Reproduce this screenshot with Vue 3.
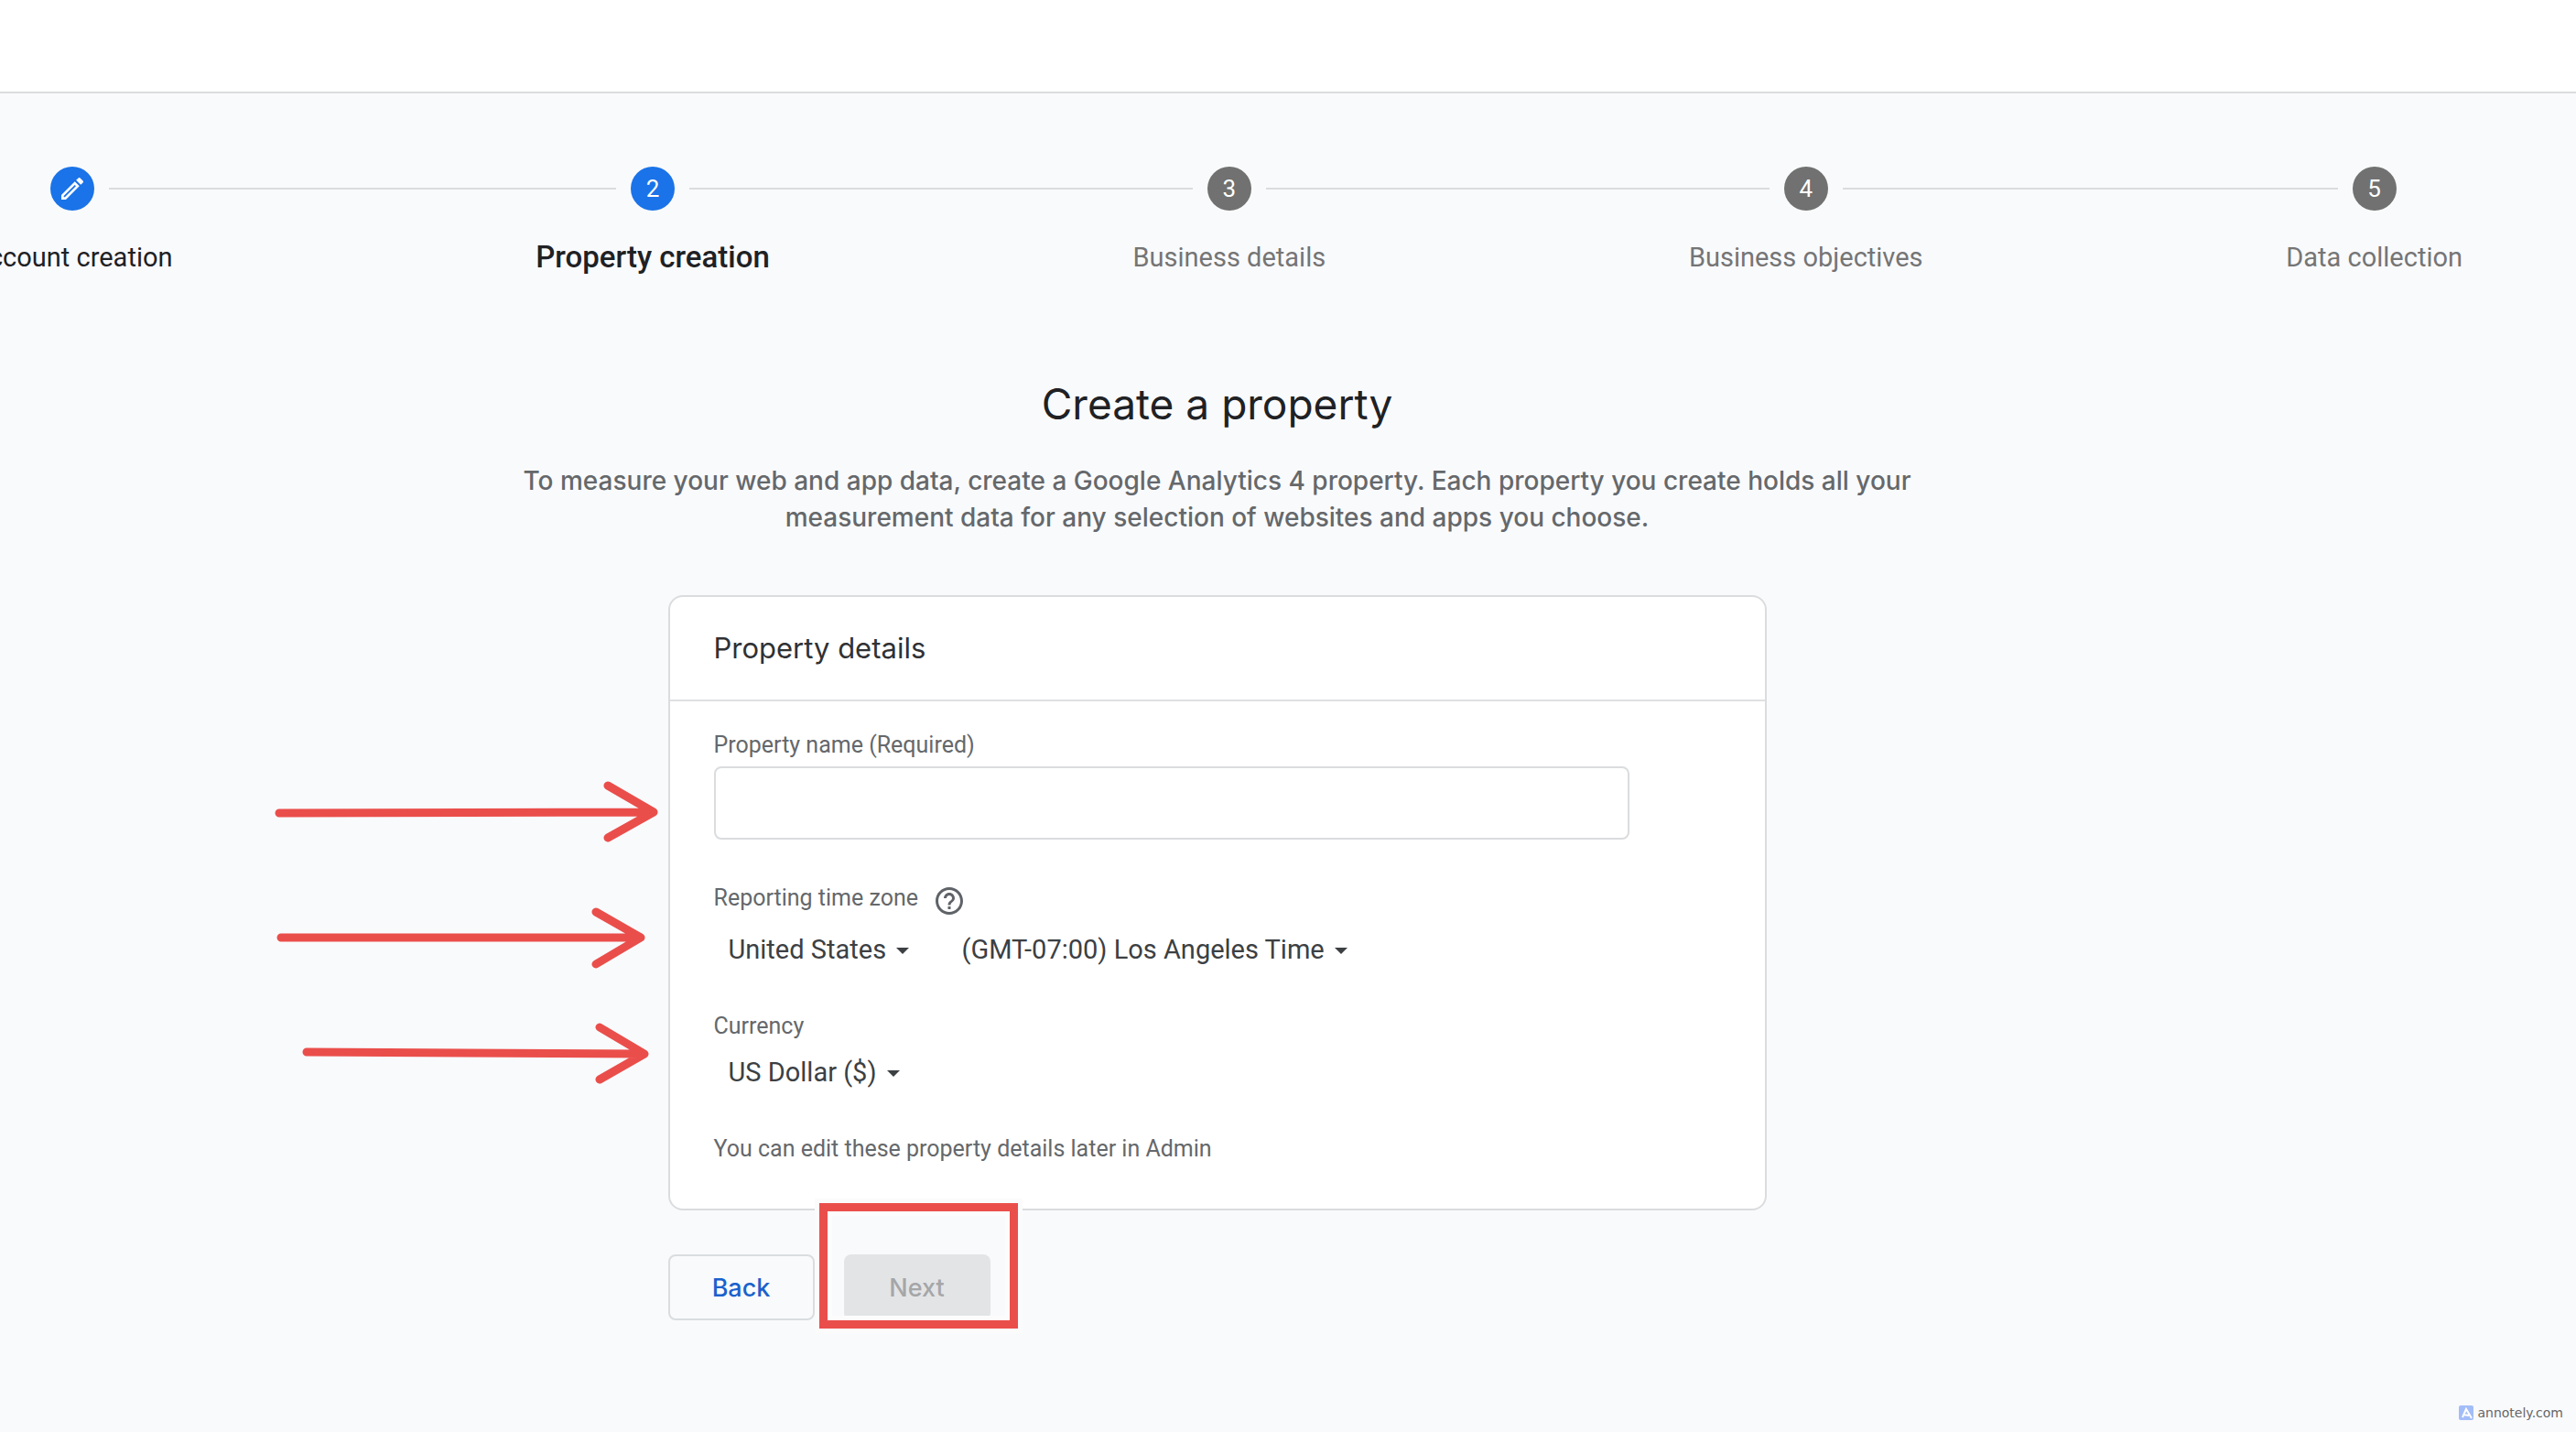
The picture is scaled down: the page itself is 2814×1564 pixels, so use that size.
<template>
  <div class="page">
    <header class="topbar"></header>

    <main class="content">
      <ol class="stepper">
        <template v-for="(s, i) in steps" :key="s.label">
          <li v-if="i > 0" class="connector" aria-hidden="true"></li>
          <li class="step" :class="s.state">
            <div class="marker">
              <span class="dot">
                <svg v-if="s.state === 'done'" class="pencil" viewBox="0 0 24 24">
                  <path d="M14.06 9.02l.92.92L5.92 19H5v-.92l9.06-9.06M17.66 3c-.25 0-.51.1-.7.29l-1.83 1.83 3.75 3.75 1.83-1.83c.39-.39.39-1.02 0-1.41l-2.34-2.34c-.2-.2-.45-.29-.71-.29zm-3.6 3.19L3 17.25V21h3.75L17.81 9.94l-3.75-3.75z" />
                </svg>
                <template v-else>{{ i + 1 }}</template>
              </span>
            </div>
            <span class="step-label">{{ s.label }}</span>
          </li>
        </template>
      </ol>

      <h1>Create a property</h1>
      <p class="intro">
        To measure your web and app data, create a Google Analytics 4 property. Each property you create holds all your
        measurement data for any selection of websites and apps you choose.
      </p>

      <form class="form" @submit.prevent>
        <section class="card">
          <h2>Property details</h2>
          <div class="card-body">
            <div class="field">
              <label class="small name-label" for="name">Property name (Required)</label>
              <input id="name" v-model="name" type="text" />
            </div>

            <div class="field">
              <div class="field-head">
                <label class="small" for="country">Reporting time zone</label>
                <button type="button" class="help" aria-label="Help">
                  <svg viewBox="0 0 24 24">
                    <path d="M11 18h2v-2h-2v2zm1-16C6.48 2 2 6.48 2 12s4.48 10 10 10 10-4.48 10-10S17.52 2 12 2zm0 18c-4.41 0-8-3.59-8-8s3.59-8 8-8 8 3.59 8 8-3.59 8-8 8zm0-14c-2.21 0-4 1.79-4 4h2c0-1.1.9-2 2-2s2 .9 2 2c0 2-3 1.75-3 5h2c0-2.25 3-2.5 3-5 0-2.21-1.79-4-4-4z" />
                  </svg>
                </button>
              </div>
              <div class="selects">
                <div class="select">
                  <select id="country" v-model="country">
                    <option>United States</option>
                  </select>
                  <svg viewBox="0 0 14 7"><path d="M0 0h14L7 7z" /></svg>
                </div>
                <div class="select">
                  <select v-model="zone" aria-label="Time zone">
                    <option>(GMT-07:00) Los Angeles Time</option>
                  </select>
                  <svg viewBox="0 0 14 7"><path d="M0 0h14L7 7z" /></svg>
                </div>
              </div>
            </div>

            <div class="field">
              <div class="field-head">
                <label class="small" for="currency">Currency</label>
              </div>
              <div class="selects">
                <div class="select">
                  <select id="currency" v-model="currency">
                    <option>US Dollar ($)</option>
                  </select>
                  <svg viewBox="0 0 14 7"><path d="M0 0h14L7 7z" /></svg>
                </div>
              </div>
            </div>

            <p class="small">You can edit these property details later in Admin</p>
          </div>
        </section>

        <div class="actions">
          <button type="button" class="btn back">Back</button>
          <div class="marked">
            <button type="submit" class="btn next" :disabled="!name">Next</button>
            <div class="frame"></div>
          </div>
        </div>

        <svg class="arrows" viewBox="0 0 440 360">
          <path d="M15 48L423 47M374 18L424 47L374 75" />
          <path d="M17 184H409M361 156L410 184L361 213" />
          <path d="M45 309L413 311M365 282L414 311L365 339" />
        </svg>
      </form>
    </main>

    <footer class="credit">
      <svg viewBox="0 0 16 16">
        <rect width="16" height="16" rx="2" fill="#a3bdf8" />
        <path d="M4 13L8 4L14 14M5 10L11 11" fill="none" stroke="#fff" stroke-width="2" />
      </svg>
      <span>annotely.com</span>
    </footer>
  </div>
</template>

<script setup>
import { ref } from 'vue'

const steps = [
  { label: 'Account creation', state: 'done' },
  { label: 'Property creation', state: 'current' },
  { label: 'Business details', state: 'todo' },
  { label: 'Business objectives', state: 'todo' },
  { label: 'Data collection', state: 'todo' }
]

const name = ref('')
const country = ref('United States')
const zone = ref('(GMT-07:00) Los Angeles Time')
const currency = ref('US Dollar ($)')
</script>

<style>
body { margin: 0; background: #f9fafc; }
</style>

<style scoped>
.page { display: flex; flex-direction: column; min-height: 100vh; overflow-x: hidden; background: #f9fafc; font-family: Roboto, sans-serif; color: #202124; }
.topbar { height: 100px; background: #fff; border-bottom: 2px solid #dadddd; }

/* the wizard is scrolled a little to the right, so the first step is cut off */
.content { margin: 80px 124px 0 -31px; }

.stepper { display: flex; margin: 0; padding: 0; list-style: none; }
.step { display: flex; flex-direction: column; gap: 32px; color: #757575; }
.marker { display: flex; align-items: center; gap: 16px; }
.marker::before, .marker::after { content: ''; flex: 1; height: 2px; background: #dadcde; }
.step:first-child .marker::before, .step:last-child .marker::after { background: none; }
.connector { flex: 1; height: 2px; margin-top: 23px; background: #dadcde; }
.dot { display: flex; align-items: center; justify-content: center; width: 48px; height: 48px; border-radius: 50%; background: #707170; color: #fff; font-size: 26px; }
.done .dot, .current .dot { background: #1a73e8; }
.pencil { width: 32px; height: 32px; fill: #fff; }
.step-label { font-size: 29px; line-height: 38px; white-space: nowrap; }
.done { color: #202124; }
.current { color: #202124; }
.current .step-label { font-size: 33px; font-weight: 500; }

h1 { margin: 112px 0 35px; font: 400 46px/58px Inter, sans-serif; text-align: center; }
.intro { max-width: 1600px; margin: 0 auto 65px; font: 500 28px/40px Inter, sans-serif; color: #65686b; text-align: center; }

.form { position: relative; max-width: 1200px; margin: 0 auto; }
.card { background: #fff; border: 2px solid #dadcde; border-radius: 16px; }
h2 { margin: 0; padding: 36px 48px; border-bottom: 2px solid #dfe0e1; font: 400 31px/40px Inter, sans-serif; color: #303134; }
.card-body { display: flex; flex-direction: column; gap: 49px; padding: 33px 148px 50px 48px; }
.small { margin: 0; font-size: 25px; line-height: 30px; color: #65686b; }
.field { display: flex; flex-direction: column; }
.name-label { margin-bottom: 8px; }
.field input { box-sizing: border-box; width: 100%; height: 80px; padding: 0 24px; border: 2px solid #dadcde; border-radius: 8px; background: #fff; font: 28px Roboto, sans-serif; color: #3c4043; outline: none; }
.field-head { display: flex; gap: 16px; margin-bottom: 15px; }
.help { width: 36px; height: 36px; padding: 0; border: 0; background: none; cursor: pointer; }
.help svg { display: block; fill: #5f6368; }
.selects { display: flex; gap: 42px; }
.select { position: relative; }
.select select { appearance: none; height: 40px; margin: 0; padding: 0 24px 0 16px; border: 0; background: none; font: 29px/40px Roboto, sans-serif; color: #3c4043; outline: none; cursor: pointer; }
.select svg { position: absolute; right: 0; top: 18px; width: 14px; height: 7px; fill: #3c4043; pointer-events: none; }

.actions { display: flex; gap: 32px; margin-top: 48px; }
.btn { box-sizing: border-box; width: 160px; height: 72px; padding: 0; border-radius: 8px; font: 500 27px Inter, sans-serif; }
.back { border: 2px solid #dadddf; background: none; color: #1a62cc; cursor: pointer; }
.next { display: block; border: 0; background: #1a73e8; color: #fff; }
.next:disabled { background: #e3e4e6; color: #a5a6a8; }

/* annotations drawn over the form */
.marked { position: relative; }
.frame { position: absolute; top: -56px; right: -30px; bottom: -9px; left: -27px; border: 9px solid #ea4e4b; box-shadow: 0 0 0 5px #fbfbfc, inset 0 0 0 5px #fcfcfd; pointer-events: none; }
.arrows { position: absolute; top: 190px; right: 100%; width: 440px; height: 360px; fill: none; stroke: #ea4e4b; stroke-width: 9; stroke-linecap: round; stroke-linejoin: round; pointer-events: none; }

.credit { display: flex; align-items: center; justify-content: flex-end; gap: 4px; margin-top: auto; padding: 0 14px 13px; font: 14px/16px "DejaVu Sans", sans-serif; color: #666; }
.credit svg { width: 16px; height: 16px; }
</style>
